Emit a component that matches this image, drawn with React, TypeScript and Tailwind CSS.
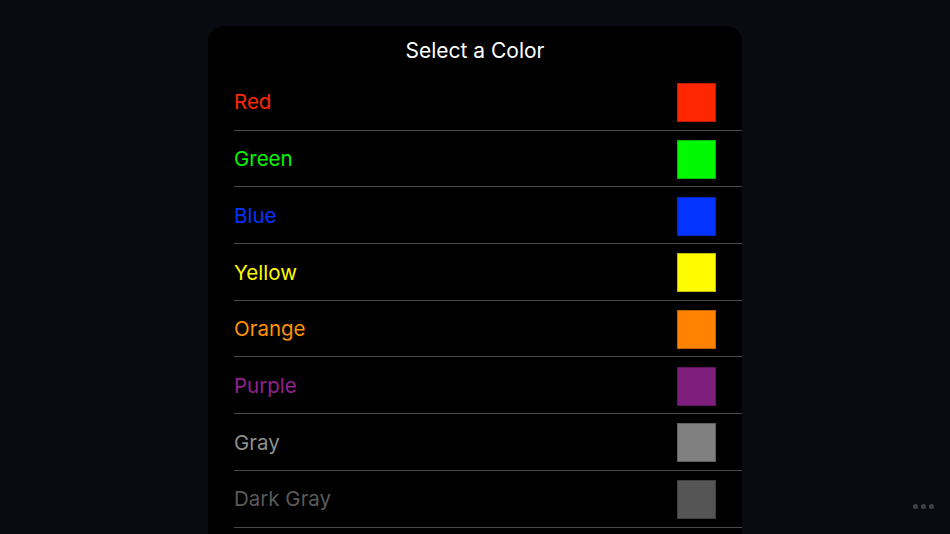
const colors = [
  { name: "Red", text: "text-[#ff2600]", swatch: "bg-[#ff2600]" },
  { name: "Green", text: "text-[#00f900]", swatch: "bg-[#00f900]" },
  { name: "Blue", text: "text-[#0433ff]", swatch: "bg-[#0433ff]" },
  { name: "Yellow", text: "text-[#fffb00]", swatch: "bg-[#fffb00]" },
  { name: "Orange", text: "text-[#ff9300]", swatch: "bg-[#ff8200]" },
  { name: "Purple", text: "text-[#942192]", swatch: "bg-[#7e1f7d]" },
  { name: "Gray", text: "text-[#8e8e8e]", swatch: "bg-[#808080]" },
  { name: "Dark Gray", text: "text-[#5a5a5a]", swatch: "bg-[#555555]" },
];

const App = () => {
  return (
    <div
      className="relative h-[534px] w-[950px] overflow-hidden bg-[#0a0b10] pt-[26px]"
      style={{ fontFamily: "Inter, 'Noto Sans', sans-serif" }}
    >
      <div className="mx-auto w-[534px] rounded-t-[16px] bg-black pb-10">
        <div className="flex h-[48px] items-center justify-center pt-[1px] text-[21px] text-white">
          Select a Color
        </div>
        <div className="flex flex-col pl-[26px]">
          {colors.map((c) => (
            <div
              key={c.name}
              className="flex h-[56.7px] items-center justify-between border-b border-[#4a4a4a] pt-[2px] pr-[26px]"
            >
              <span className={`${c.text} text-[20.5px]`}>{c.name}</span>
              <div className={`${c.swatch} h-[39px] w-[39px] border border-black/25`} />
            </div>
          ))}
        </div>
      </div>
      <div className="absolute bottom-[25px] right-[16px] flex gap-[3px]">
        <span className="h-[5px] w-[5px] rounded-full bg-[#3f3f44]" />
        <span className="h-[5px] w-[5px] rounded-full bg-[#3f3f44]" />
        <span className="h-[5px] w-[5px] rounded-full bg-[#3f3f44]" />
      </div>
    </div>
  );
};

export default App;
